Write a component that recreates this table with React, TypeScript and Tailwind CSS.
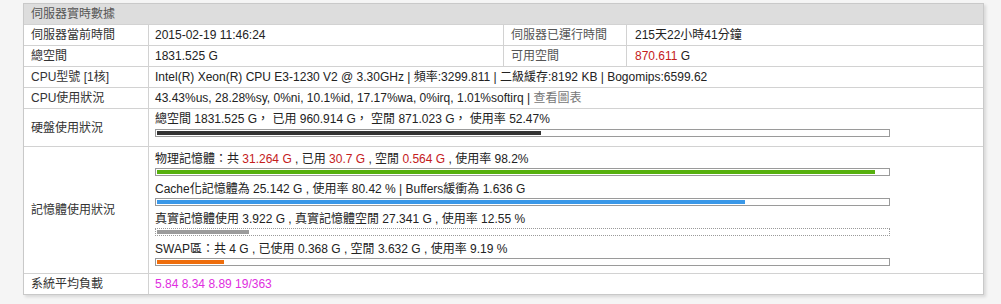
import type { ReactNode } from 'react';

const font = { fontFamily: '"Liberation Sans", "Noto Sans CJK TC", sans-serif' };

function Bar({ pct, color, dotted }: { pct: number; color: string; dotted?: boolean }) {
  return (
    <div
      className={`w-[735px] h-[8px] p-[1px] bg-white border border-[#9a9a9a] ${dotted ? 'border-dotted' : ''}`}
    >
      <div className={`h-full ${color}`} style={{ width: `${pct}%` }} />
    </div>
  );
}

function Row({ label, children, className = '' }: { label: string; children: ReactNode; className?: string }) {
  return (
    <div className={`flex border-b border-[#d2d2d2] last:border-b-0 ${className}`}>
      <div className="w-[125px] shrink-0 border-r border-[#d2d2d2] pl-[7px] flex items-center text-[#333]">
        {label}
      </div>
      <div className="flex-1 pl-[6px] flex flex-col justify-center text-[#222]">{children}</div>
    </div>
  );
}

const Red = ({ children }: { children: ReactNode }) => <span className="text-[#c4201c]">{children}</span>;

export default function App() {
  return (
    <div className="w-full h-[304px] bg-[#f5f5f5] pt-[3px] pl-[23px] text-[12px] leading-[18px]" style={font}>
      <div className="w-[961px] bg-white border border-[#c9c9c9] shadow-[2px_2px_3px_rgba(0,0,0,0.12)]">
        <div className="h-[21px] bg-[#dddddd] border-b border-[#d2d2d2] pl-[7px] flex items-center text-[#555]">
          伺服器實時數據
        </div>

        <div className="flex h-[21px] border-b border-[#d2d2d2]">
          <div className="w-[125px] shrink-0 border-r border-[#d2d2d2] pl-[7px] flex items-center text-[#333]">伺服器當前時間</div>
          <div className="w-[355px] shrink-0 border-r border-[#d2d2d2] pl-[6px] flex items-center text-[#222]">2015-02-19 11:46:24</div>
          <div className="w-[123px] shrink-0 border-r border-[#d2d2d2] pl-[7px] flex items-center text-[#555]">伺服器已運行時間</div>
          <div className="flex-1 pl-[8px] flex items-center text-[#222]">215天22小時41分鐘</div>
        </div>

        <div className="flex h-[21px] border-b border-[#d2d2d2]">
          <div className="w-[125px] shrink-0 border-r border-[#d2d2d2] pl-[7px] flex items-center text-[#333]">總空間</div>
          <div className="w-[355px] shrink-0 border-r border-[#d2d2d2] pl-[6px] flex items-center text-[#222]">1831.525 G</div>
          <div className="w-[123px] shrink-0 border-r border-[#d2d2d2] pl-[7px] flex items-center text-[#555]">可用空間</div>
          <div className="flex-1 pl-[8px] flex items-center text-[#222]">
            <Red>870.611</Red>&nbsp;G
          </div>
        </div>

        <Row label="CPU型號 [1核]" className="h-[21px]">
          Intel(R) Xeon(R) CPU E3-1230 V2 @ 3.30GHz | 頻率:3299.811 | 二級緩存:8192 KB | Bogomips:6599.62
        </Row>

        <Row label="CPU使用狀況" className="h-[21px]">
          <div>
            43.43%us, 28.28%sy, 0%ni, 10.1%id, 17.17%wa, 0%irq, 1.01%softirq | <span className="text-[#777]">查看圖表</span>
          </div>
        </Row>

        <Row label="硬盤使用狀況" className="h-[38px]">
          <div className="pb-[9px]">
            <div>總空間 1831.525 G， 已用 960.914 G， 空閒 871.023 G， 使用率 52.47%</div>
            <div className="mt-[1px]">
              <Bar pct={52.47} color="bg-[#333333]" />
            </div>
          </div>
        </Row>

        <Row label="記憶體使用狀況" className="h-[127px]">
          <div className="flex flex-col gap-[4px] pb-[5px]">
            <div>
              <div>
                物理記憶體：共 <Red>31.264 G</Red> , 已用 <Red>30.7 G</Red> , 空閒 <Red>0.564 G</Red> , 使用率 98.2%
              </div>
              <Bar pct={98.2} color="bg-[#56b00e]" />
            </div>
            <div>
              <div>Cache化記憶體為 25.142 G , 使用率 80.42 % | Buffers緩衝為 1.636 G</div>
              <Bar pct={80.42} color="bg-[#3a98e8]" />
            </div>
            <div>
              <div>真實記憶體使用 3.922 G , 真實記憶體空閒 27.341 G , 使用率 12.55 %</div>
              <Bar pct={12.55} color="bg-[#9b9b9b]" dotted />
            </div>
            <div>
              <div>SWAP區：共 4 G , 已使用 0.368 G , 空閒 3.632 G , 使用率 9.19 %</div>
              <Bar pct={9.19} color="bg-[#ee6d0c]" />
            </div>
          </div>
        </Row>

        <Row label="系統平均負載" className="h-[20px]">
          <span className="text-[#e02ee0]">5.84 8.34 8.89 19/363</span>
        </Row>
      </div>
    </div>
  );
}
